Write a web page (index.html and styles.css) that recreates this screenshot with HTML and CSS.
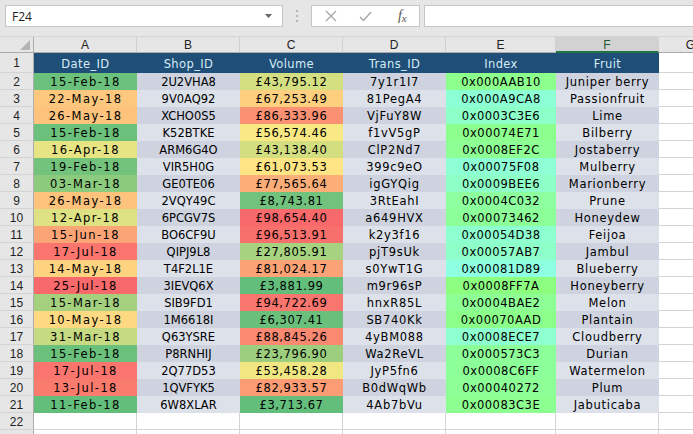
FILE: index.html
```html
<!DOCTYPE html>
<html>
<head>
<meta charset="utf-8">
<link rel="stylesheet" href="styles.css">
</head>
<body>
<div class="toolbar">
  <div class="namebox"><span class="nb-text">F24</span><svg class="caret" width="8" height="5" viewBox="0 0 8 5"><path d="M0 0H7L3.5 4Z" fill="#666"/></svg></div>
  <div class="dots"><svg width="4" height="14" viewBox="0 0 4 14"><rect x="1" y="1" width="2" height="2" fill="#b3b3b3"/><rect x="1" y="6" width="2" height="2" fill="#b3b3b3"/><rect x="1" y="11" width="2" height="2" fill="#b3b3b3"/></svg></div>
  <div class="fbtns">
    <span class="fb"><svg width="12" height="12" viewBox="0 0 12 12"><path d="M1 1L11 11M11 1L1 11" stroke="#a6a6a6" stroke-width="1.3"/></svg></span>
    <span class="fb"><svg width="13" height="11" viewBox="0 0 13 11"><path d="M1 6L4.5 9.5L12 1" stroke="#a6a6a6" stroke-width="1.4" fill="none"/></svg></span>
    <span class="fb fx">f<span class="fx-x">x</span></span>
  </div>
  <div class="finput"></div>
</div>
<div class="sheet">
  <div class="corner"><svg width="10" height="10" viewBox="0 0 10 10"><path d="M10 0V10H0Z" fill="#b4b4b4"/></svg></div>
  <div class="ch">A</div><div class="ch">B</div><div class="ch">C</div><div class="ch">D</div><div class="ch">E</div><div class="ch sel">F</div><div class="ch">G</div><div class="ch last"></div>

  <div class="rh r1">1</div>
  <div class="hd">Date_ID</div><div class="hd">Shop_ID</div><div class="hd">Volume</div><div class="hd">Trans_ID</div><div class="hd">Index</div><div class="hd">Fruit</div><div class="e"></div><div class="e"></div>

  <div class="rh">2</div><div class="c dt" style="background:rgb(107,192,124)">15-Feb-18</div><div class="c bd sh">2U2VHA8</div><div class="c vol" style="background:rgb(212,223,130)">£43,795.12</div><div class="c bd tr">7y1r1I7</div><div class="c ix" style="background:#8cff8c">0x000AAB10</div><div class="c bd fr">Juniper berry</div><div class="e"></div><div class="e"></div>
  <div class="rh">3</div><div class="c dt" style="background:rgb(253,200,125)">22-May-18</div><div class="c bl sh">9V0AQ92</div><div class="c vol" style="background:rgb(253,207,127)">£67,253.49</div><div class="c bl tr">81PegA4</div><div class="c ix" style="background:#8dffd4">0x000A9CA8</div><div class="c bl fr">Passionfruit</div><div class="e"></div><div class="e"></div>
  <div class="rh">4</div><div class="c dt" style="background:rgb(253,194,124)">26-May-18</div><div class="c bd sh">XCHO0S5</div><div class="c vol" style="background:rgb(250,145,115)">£86,333.96</div><div class="c bd tr">VjFuY8W</div><div class="c ix" style="background:#8dffc8">0x0003C3E6</div><div class="c bd fr">Lime</div><div class="e"></div><div class="e"></div>
  <div class="rh">5</div><div class="c dt" style="background:rgb(107,192,124)">15-Feb-18</div><div class="c bl sh">K52BTKE</div><div class="c vol" style="background:rgb(249,233,132)">£56,574.46</div><div class="c bl tr">f1vV5gP</div><div class="c ix" style="background:#8dff8e">0x00074E71</div><div class="c bl fr">Bilberry</div><div class="e"></div><div class="e"></div>
  <div class="rh">6</div><div class="c dt" style="background:rgb(230,228,131)">16-Apr-18</div><div class="c bd sh">ARM6G4O</div><div class="c vol" style="background:rgb(211,222,129)">£43,138.40</div><div class="c bd tr">ClP2Nd7</div><div class="c ix" style="background:#8eff94">0x0008EF2C</div><div class="c bd fr">Jostaberry</div><div class="e"></div><div class="e"></div>
  <div class="rh">7</div><div class="c dt" style="background:rgb(115,195,124)">19-Feb-18</div><div class="c bl sh">VIR5H0G</div><div class="c vol" style="background:rgb(255,228,131)">£61,073.53</div><div class="c bl tr">399c9eO</div><div class="c ix" style="background:#8effd4">0x00075F08</div><div class="c bl fr">Mulberry</div><div class="e"></div><div class="e"></div>
  <div class="rh">8</div><div class="c dt" style="background:rgb(140,202,125)">03-Mar-18</div><div class="c bd sh">GE0TE06</div><div class="c vol" style="background:rgb(252,174,120)">£77,565.64</div><div class="c bd tr">igGYQig</div><div class="c ix" style="background:#8effc6">0x0009BEE6</div><div class="c bd fr">Marionberry</div><div class="e"></div><div class="e"></div>
  <div class="rh">9</div><div class="c dt" style="background:rgb(253,194,124)">26-May-18</div><div class="c bl sh">2VQY49C</div><div class="c vol" style="background:rgb(113,194,124)">£8,743.81</div><div class="c bl tr">3RtEahI</div><div class="c ix" style="background:#8dff9e">0x0004C032</div><div class="c bl fr">Prune</div><div class="e"></div><div class="e"></div>
  <div class="rh">10</div><div class="c dt" style="background:rgb(222,226,130)">12-Apr-18</div><div class="c bd sh">6PCGV7S</div><div class="c vol" style="background:rgb(248,105,107)">£98,654.40</div><div class="c bd tr">a649HVX</div><div class="c ix" style="background:#8dff98">0x00073462</div><div class="c bd fr">Honeydew</div><div class="e"></div><div class="e"></div>
  <div class="rh">11</div><div class="c dt" style="background:rgb(251,164,118)">15-Jun-18</div><div class="c bl sh">BO6CF9U</div><div class="c vol" style="background:rgb(248,112,108)">£96,513.91</div><div class="c bl tr">k2y3f16</div><div class="c ix" style="background:#8effcf">0x00054D38</div><div class="c bl fr">Feijoa</div><div class="e"></div><div class="e"></div>
  <div class="rh">12</div><div class="c dt" style="background:rgb(249,117,109)">17-Jul-18</div><div class="c bd sh">QIPJ9L8</div><div class="c vol" style="background:rgb(167,210,127)">£27,805.91</div><div class="c bd tr">pjT9sUk</div><div class="c ix" style="background:#8effc8">0x00057AB7</div><div class="c bd fr">Jambul</div><div class="e"></div><div class="e"></div>
  <div class="rh">13</div><div class="c dt" style="background:rgb(254,211,128)">14-May-18</div><div class="c bl sh">T4F2L1E</div><div class="c vol" style="background:rgb(251,163,118)">£81,024.17</div><div class="c bl tr">s0YwT1G</div><div class="c ix" style="background:#8effe0">0x00081D89</div><div class="c bl fr">Blueberry</div><div class="e"></div><div class="e"></div>
  <div class="rh">14</div><div class="c dt" style="background:rgb(248,105,107)">25-Jul-18</div><div class="c bd sh">3IEVQ6X</div><div class="c vol" style="background:rgb(99,190,123)">£3,881.99</div><div class="c bd tr">m9r96sP</div><div class="c ix" style="background:#8cff80">0x0008FF7A</div><div class="c bd fr">Honeyberry</div><div class="e"></div><div class="e"></div>
  <div class="rh">15</div><div class="c dt" style="background:rgb(165,209,127)">15-Mar-18</div><div class="c bl sh">SIB9FD1</div><div class="c vol" style="background:rgb(249,118,110)">£94,722.69</div><div class="c bl tr">hnxR85L</div><div class="c ix" style="background:#8dff94">0x0004BAE2</div><div class="c bl fr">Melon</div><div class="e"></div><div class="e"></div>
  <div class="rh">16</div><div class="c dt" style="background:rgb(254,217,129)">10-May-18</div><div class="c bd sh">1M6618I</div><div class="c vol" style="background:rgb(106,192,123)">£6,307.41</div><div class="c bd tr">SB740Kk</div><div class="c ix" style="background:#8cff8a">0x00070AAD</div><div class="c bd fr">Plantain</div><div class="e"></div><div class="e"></div>
  <div class="rh">17</div><div class="c dt" style="background:rgb(198,218,129)">31-Mar-18</div><div class="c bl sh">Q63YSRE</div><div class="c vol" style="background:rgb(250,137,113)">£88,845.26</div><div class="c bl tr">4yBM088</div><div class="c ix" style="background:#8effce">0x0008ECE7</div><div class="c bl fr">Cloudberry</div><div class="e"></div><div class="e"></div>
  <div class="rh">18</div><div class="c dt" style="background:rgb(107,192,124)">15-Feb-18</div><div class="c bd sh">P8RNHIJ</div><div class="c vol" style="background:rgb(156,206,126)">£23,796.90</div><div class="c bd tr">Wa2ReVL</div><div class="c ix" style="background:#8dff98">0x000573C3</div><div class="c bd fr">Durian</div><div class="e"></div><div class="e"></div>
  <div class="rh">19</div><div class="c dt" style="background:rgb(249,117,109)">17-Jul-18</div><div class="c bl sh">2Q77D53</div><div class="c vol" style="background:rgb(240,231,131)">£53,458.28</div><div class="c bl tr">JyP5fn6</div><div class="c ix" style="background:#8dff98">0x0008C6FF</div><div class="c bl fr">Watermelon</div><div class="e"></div><div class="e"></div>
  <div class="rh">20</div><div class="c dt" style="background:rgb(249,123,110)">13-Jul-18</div><div class="c bd sh">1QVFYK5</div><div class="c vol" style="background:rgb(251,156,117)">£82,933.57</div><div class="c bd tr">B0dWqWb</div><div class="c ix" style="background:#8dff96">0x00040272</div><div class="c bd fr">Plum</div><div class="e"></div><div class="e"></div>
  <div class="rh">21</div><div class="c dt" style="background:rgb(99,190,123)">11-Feb-18</div><div class="c bl sh">6W8XLAR</div><div class="c vol" style="background:rgb(99,190,123)">£3,713.67</div><div class="c bl tr">4Ab7bVu</div><div class="c ix" style="background:#8dff90">0x00083C3E</div><div class="c bl fr">Jabuticaba</div><div class="e"></div><div class="e"></div>

  <div class="rh">22</div><div class="e"></div><div class="e"></div><div class="e"></div><div class="e"></div><div class="e"></div><div class="e"></div><div class="e"></div><div class="e"></div>
  <div class="rh"></div><div class="e"></div><div class="e"></div><div class="e"></div><div class="e"></div><div class="e"></div><div class="e"></div><div class="e"></div><div class="e"></div>
</div>
</body>
</html>
```

FILE: styles.css
```css
* { box-sizing: border-box; }
html, body { margin: 0; padding: 0; background: #ffffff; overflow: hidden; }
body { width: 693px; height: 434px; }

.toolbar {
  height: 37px;
  background: #e6e6e6;
  display: flex;
  align-items: flex-start;
  padding: 5px 0 0 5px;
  border-bottom: 1px solid #d4d4d4;
}
.namebox {
  width: 278px;
  height: 22px;
  background: #fff;
  border: 1px solid #c6c6c6;
  display: flex;
  align-items: center;
  justify-content: space-between;
  padding: 0 9px 0 6px;
  font-family: "Open Sans", "Liberation Sans", sans-serif;
  font-size: 12px;
  color: #222;
}
.caret { margin-top: 1px; }
.dots {
  width: 28px;
  height: 22px;
  display: flex;
  align-items: center;
  justify-content: center;
}
.fbtns {
  width: 109px;
  height: 22px;
  background: #fff;
  border: 1px solid #c6c6c6;
  display: flex;
  align-items: center;
  padding-left: 1px;
}
.fb {
  width: 36px;
  height: 20px;
  display: flex;
  align-items: center;
  justify-content: center;
}
.fx {
  font-family: "Liberation Serif", serif;
  font-style: italic;
  font-size: 14px;
  color: #555;
  padding-left: 2px;
}
.fx-x { font-size: 11px; margin-top: 3px; }
.finput {
  flex: 1;
  height: 22px;
  margin-left: 4px;
  background: #fff;
  border: 1px solid #c6c6c6;
  border-right: none;
}

.sheet {
  display: grid;
  grid-template-columns: 34px 103px 103px 103px 103px 110px 103px 64px 1fr;
  grid-template-rows: 16px 20px repeat(20, 17px) 17px 17px;
  font-family: "DejaVu Sans", Verdana, sans-serif;
  font-size: 11.5px;
  color: #000;
}
.corner {
  background: #e6e6e6;
  border-right: 1px solid #ababab;
  border-bottom: 1px solid #ababab;
  display: flex;
  align-items: flex-end;
  justify-content: flex-end;
  padding: 0 3px 2px 0;
}
.ch {
  background: #e6e6e6;
  border-right: 1px solid #d0d0d0;
  border-bottom: 1px solid #ababab;
  font-family: "Liberation Sans", Arial, sans-serif;
  font-size: 12px;
  color: #222;
  display: flex;
  align-items: center;
  justify-content: center;
  padding-top: 1px;
}
.ch.sel {
  background: #d2d2d2;
  border-bottom: 2px solid #217346;
  color: #1e5c38;
}
.ch.last { border-right: none; }
.rh {
  background: #e6e6e6;
  border-right: 1px solid #ababab;
  border-bottom: 1px solid #d4d4d4;
  font-family: "Liberation Sans", Arial, sans-serif;
  font-size: 12px;
  color: #222;
  display: flex;
  align-items: center;
  justify-content: center;
  padding-top: 1px;
}
.hd {
  background: #1f4e78;
  color: #d6ecf5;
  display: flex;
  align-items: center;
  justify-content: center;
  letter-spacing: 0.4px;
  padding-top: 1px;
}
.c {
  display: flex;
  align-items: center;
  justify-content: center;
  white-space: nowrap;
  letter-spacing: 0.6px;
  padding-top: 1px;
}
.dt { letter-spacing: 1.4px; }
.sh { letter-spacing: 0; }
.vol { letter-spacing: 0.6px; }
.tr { letter-spacing: 0.7px; }
.ix { letter-spacing: 0.5px; }
.fr { letter-spacing: 0.7px; }
.bd { background: #ced3df; }
.bl { background: #dde1ea; }
.e {
  background: #fff;
  border-right: 1px solid #d4d4d4;
  border-bottom: 1px solid #d4d4d4;
}
```
